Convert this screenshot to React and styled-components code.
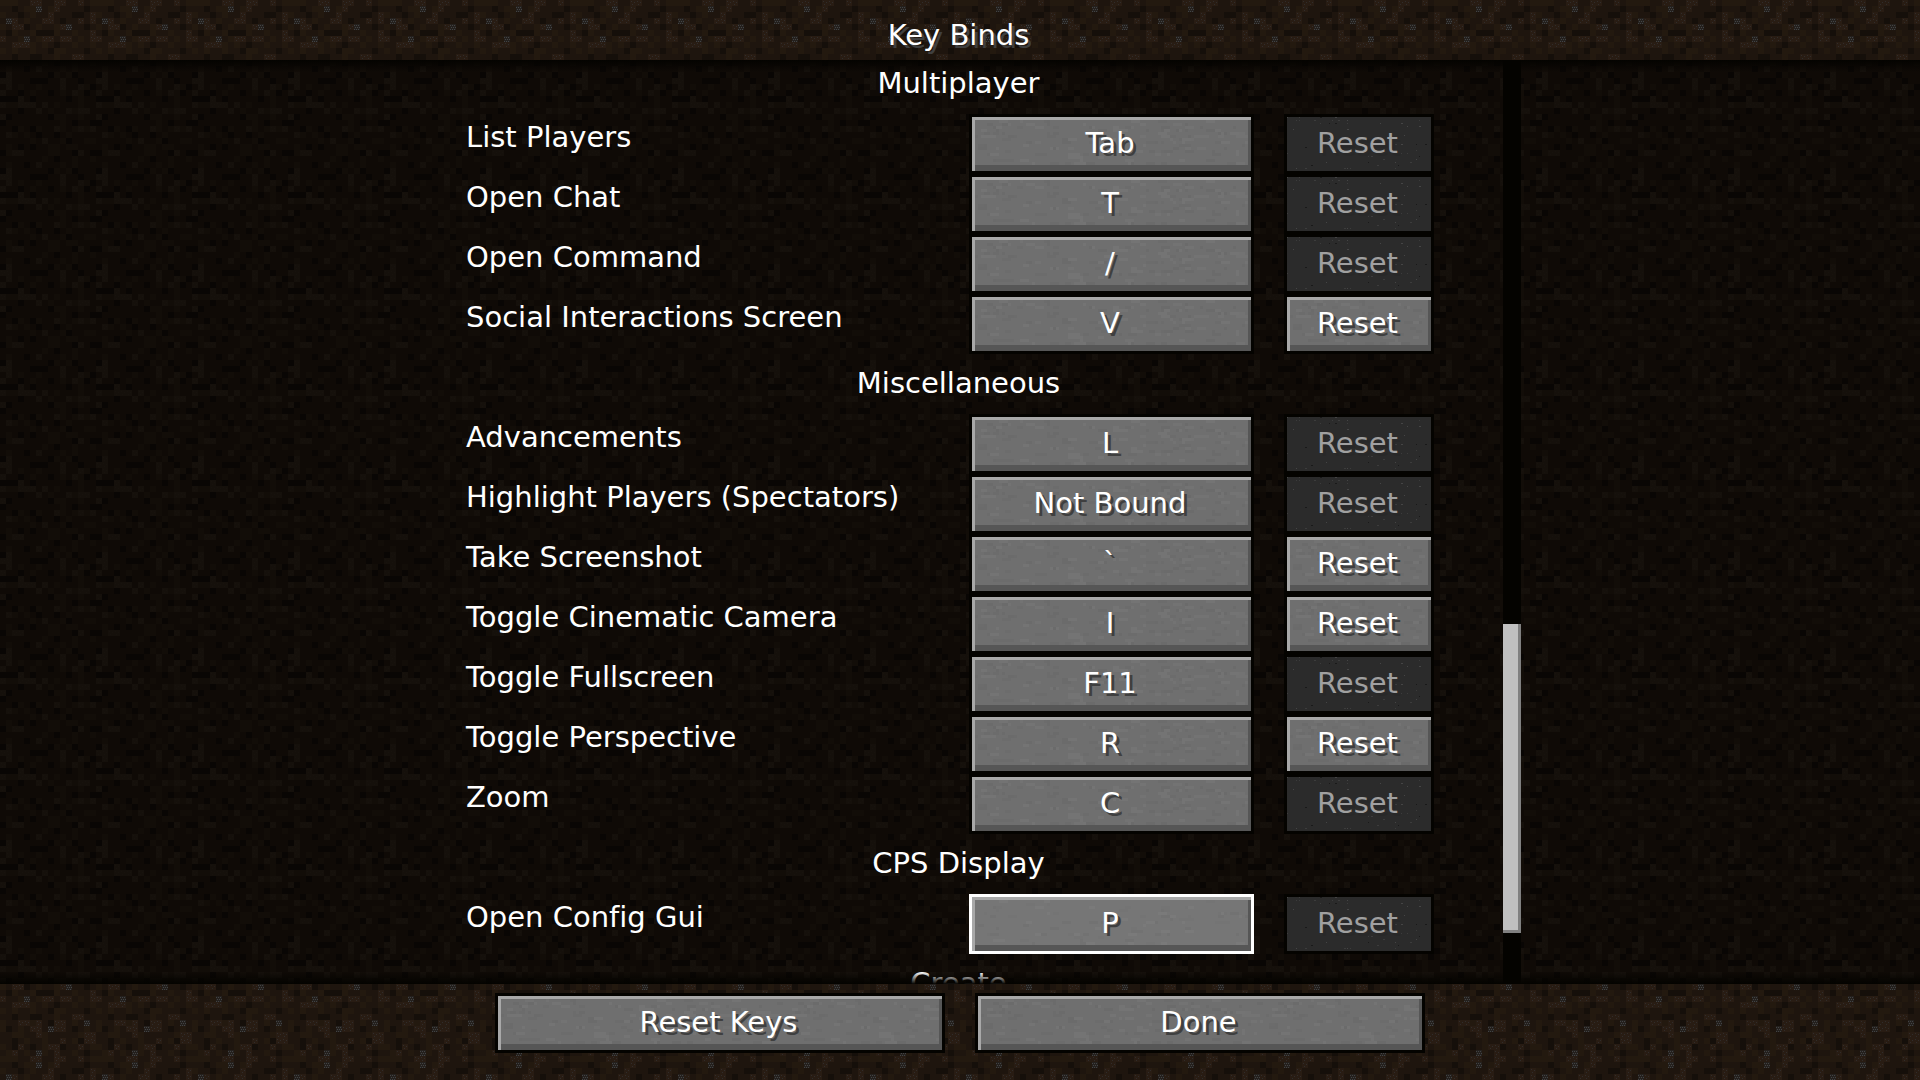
import React from "react";
import styled, { createGlobalStyle, css } from "styled-components";

/* ---------- block textures: 16x16 cells, repeated ---------- */

const CELL = 6;

const DIRT = [
  "mmm..ll..ll..l.m",
  "..d.mms.ml....d.",
  "m..d.m..l...dd.l",
  ".sl.m..ll.d..l.l",
  "m.lld.m..mls..d.",
  ".dm..mdddm..m..l",
  "l..ms.mll.ll.m.l",
  "..lllm.m.d..m..m",
  "m.m..m..dmm...d.",
  "..d..dd..m..ll..",
  "m..llml.dll.m.s.",
  "md.m.ll.sll.d.m.",
  "..mm..lm.....mll",
  "..d.m..m..l.mdll",
  "m.dl.d.mlld..l.m",
  ".ml.m.sm.l..m.d.",
];

const DEEP = [
  "dl......dm.md...",
  "ll...ddd..l..d..",
  ".l.m..m...l..lmd",
  "l..d.m..d.m.lmd.",
  "dddl.d.....d.m..",
  "lmmlll.l.m...m..",
  "...d..l.m..lmll.",
  "ld......dmm..m..",
  "d.........m.d..d",
  "..dm.dm..lm.mlml",
  ".lm.m.d..d.m....",
  ".....m.l..md..mm",
  ".m.d.d..mm.mm...",
  "dmll....mm..dl.d",
  ".......m.d..m..m",
  ".m..d.l...m.m...",
];

const dirtColors = {
  base: "#1e150e",
  m: "#23190f",
  l: "#281c13",
  d: "#150f0a",
  s: "#24201d",
  dot: "#302c2a",
};

const deepColors = {
  base: "#0f0a06",
  m: "#120d08",
  l: "#15100b",
  d: "#090604",
  s: "#15100b",
  dot: "#17120d",
};

const svgUrl = (width, height, body) =>
  `url("data:image/svg+xml,${encodeURIComponent(
    `<svg xmlns="http://www.w3.org/2000/svg" width="${width}" height="${height}" shape-rendering="crispEdges">${body}</svg>`
  )}")`;

const rect = (x, y, w, h, fill) =>
  `<rect x="${x}" y="${y}" width="${w}" height="${h}" fill="${fill}"/>`;

function blockTexture(map, colors) {
  let body = rect(0, 0, 96, 96, colors.base);
  map.forEach((row, r) =>
    [...row].forEach((cell, c) => {
      if (cell === ".") return;
      const x = c * CELL;
      const y = r * CELL;
      body += rect(x, y, CELL, CELL, colors[cell]);
      if (cell === "l") {
        body += rect(x + 1, y + 1, 1, 1, colors.dot);
        body += rect(x + 4, y + 2, 1, 1, colors.dot);
        body += rect(x + 2, y + 4, 1, 1, colors.dot);
      }
      if (cell === "s") {
        for (let i = 0; i < 6; i += 2) {
          body += rect(x + i, y + 1, 1, 1, "#424344");
          body += rect(x + i + 1, y + 3, 1, 1, "#424344");
          body += rect(x + i, y + 5, 1, 1, "#424344");
        }
      }
    })
  );
  return svgUrl(96, 96, body);
}

function speckle(width, height, count, sizes, fills, seed) {
  let state = seed;
  const next = (n) => {
    state = (state * 16807) % 2147483647;
    return state % n;
  };
  let body = "";
  for (let i = 0; i < count; i += 1) {
    const w = sizes[next(sizes.length)];
    body += rect(next(width / 3) * 3, next(height / 3) * 3, w, sizes[0], fills[next(fills.length)]);
  }
  return svgUrl(width, height, body);
}

const dirt = blockTexture(DIRT, dirtColors);
const deepDirt = blockTexture(DEEP, deepColors);
const stone = speckle(285, 54, 210, [3, 6, 9], ["#737373", "#6b6b6b", "#747474", "#6c6c6c"], 77);
const litStone = speckle(285, 54, 120, [3, 6, 9], ["#7a7a7a", "#727272", "#747474"], 77);
const darkStone = speckle(144, 54, 60, [1, 1, 2], ["#454545", "#3c3c3c", "#191919"], 1234);

/* ---------- styles ---------- */

const GlobalStyle = createGlobalStyle`
  *, *::before, *::after { box-sizing: border-box; }
  html, body { margin: 0; background: #1e150e; }
  body, button {
    font-family: "DejaVu Sans", Verdana, sans-serif;
    font-size: 29px;
    font-variant-ligatures: none;
    line-height: 30px;
    color: #fff;
  }
`;

const Screen = styled.main`
  display: flex;
  flex-direction: column;
  height: 100vh;
  overflow: hidden;
  background: ${dirt};
`;

const Header = styled.header`
  flex: none;
  height: 60px;
  padding: 20px 3px 0 0;
`;

const Title = styled.h1`
  margin: 0;
  font: inherit;
  text-align: center;
  text-shadow: 3px 3px 0 #3f3f3f;
`;

const ListArea = styled.section`
  position: relative;
  flex: 1;
  min-height: 0;
  display: grid;
  grid-template-columns: 1fr 988px 1fr;
  overflow: hidden;
  background: ${deepDirt} 0 12px;

  &::before,
  &::after {
    content: "";
    position: absolute;
    left: 0;
    right: 0;
    height: 12px;
    pointer-events: none;
  }
  &::before {
    top: 0;
    background: linear-gradient(#040300, transparent);
  }
  &::after {
    bottom: 0;
    background: linear-gradient(transparent, #040300);
  }
`;

const Entries = styled.div`
  grid-column: 2;
  min-height: 0;
  margin-top: -6px;
`;

const GroupTitle = styled.h2`
  margin: 0;
  padding: 14px 3px 16px 0;
  font: inherit;
  text-align: center;
`;

const Entry = styled.div`
  display: grid;
  grid-template-columns: 1fr 285px 150px;
  column-gap: 30px;
  height: 60px;
  padding-right: 20px;
`;

const EntryName = styled.span`
  padding-top: 8px;
  white-space: nowrap;
`;

const Button = styled.button`
  height: 60px;
  padding: 0 3px 2px 0;
  border: 3px solid #040300;
  border-radius: 0;
  outline: none;
  text-align: center;
  text-shadow: 3px 3px 0 #3f3f3f;
  background: ${stone} #6f6f6f;
  box-shadow: inset 0 3px #a8a8a8, inset 3px 0 #a8a8a8, inset -3px 0 #565656,
    inset 0 -6px #565656;

  ${(p) =>
    p.$highlighted &&
    css`
      border-color: #fff;
      background: ${litStone} #767676;
    `}

  &:disabled {
    color: #a0a0a0;
    text-shadow: 3px 3px 0 #282828;
    background: ${darkStone} #2b2b2b;
    box-shadow: none;
  }
`;

const Track = styled.div`
  grid-column: 3;
  display: flex;
  flex-direction: column;
  width: 18px;
  margin-left: 49px;
  background: #040300;
`;

const Space = styled.div`
  flex: ${(p) => p.$share} 0 0;
`;

const Thumb = styled.div`
  flex: 309 0 0;
  background: #c0c0c0;
  box-shadow: inset -3px -3px #808080;
`;

const Footer = styled.footer`
  flex: none;
  display: grid;
  grid-template-columns: 450px 450px;
  justify-content: center;
  column-gap: 30px;
  height: 96px;
  padding-top: 9px;
`;

/* ---------- content ---------- */

const groups = [
  {
    title: "Multiplayer",
    binds: [
      { name: "List Players", bound: "Tab" },
      { name: "Open Chat", bound: "T" },
      { name: "Open Command", bound: "/" },
      { name: "Social Interactions Screen", bound: "V", changed: true },
    ],
  },
  {
    title: "Miscellaneous",
    binds: [
      { name: "Advancements", bound: "L" },
      { name: "Highlight Players (Spectators)", bound: "Not Bound" },
      { name: "Take Screenshot", bound: "`", changed: true },
      { name: "Toggle Cinematic Camera", bound: "I", changed: true },
      { name: "Toggle Fullscreen", bound: "F11" },
      { name: "Toggle Perspective", bound: "R", changed: true },
      { name: "Zoom", bound: "C" },
    ],
  },
  {
    title: "CPS Display",
    binds: [{ name: "Open Config Gui", bound: "P", highlighted: true }],
  },
  { title: "Create", binds: [] },
];

function KeyBind({ name, bound, changed, highlighted }) {
  const id = name.replace(/\W+/g, "-").toLowerCase();
  return (
    <Entry>
      <EntryName id={id}>{name}</EntryName>
      <Button type="button" aria-describedby={id} $highlighted={highlighted}>
        {bound}
      </Button>
      <Button type="button" aria-describedby={id} disabled={!changed}>
        Reset
      </Button>
    </Entry>
  );
}

export default function App() {
  return (
    <>
      <GlobalStyle />
      <Screen>
        <Header>
          <Title>Key Binds</Title>
        </Header>
        <ListArea>
          <Entries>
            {groups.map((group) => (
              <React.Fragment key={group.title}>
                <GroupTitle>{group.title}</GroupTitle>
                {group.binds.map((bind) => (
                  <KeyBind key={bind.name} {...bind} />
                ))}
              </React.Fragment>
            ))}
          </Entries>
          <Track>
            <Space $share={564} />
            <Thumb />
            <Space $share={51} />
          </Track>
        </ListArea>
        <Footer>
          <Button type="button">Reset Keys</Button>
          <Button type="button">Done</Button>
        </Footer>
      </Screen>
    </>
  );
}
